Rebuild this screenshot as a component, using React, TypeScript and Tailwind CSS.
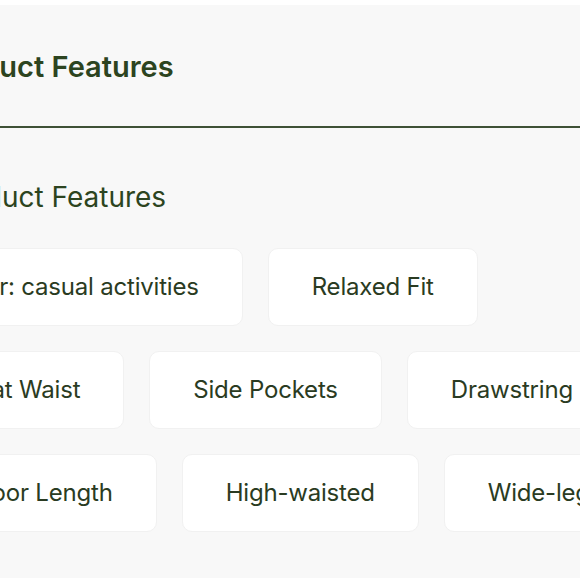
const features = [
  'For: casual activities',
  'Relaxed Fit',
  'Flat Waist',
  'Side Pockets',
  'Drawstring',
  'Floor Length',
  'High-waisted',
  'Wide-leg',
];

export default function App() {
  return (
    <div className="min-h-screen bg-white pt-[5px] overflow-hidden" style={{ fontFamily: 'Inter, "Noto Sans", sans-serif' }}>
      <div className="bg-[#f8f8f8] h-[573px] overflow-hidden">
        {/* header */}
        <div className="border-b-2 border-[#3f5136] w-[580px]">
          <h1 className="ml-[-66px] pt-[44px] pb-[41px] text-[29px] leading-[36px] font-semibold text-[#2c4420] whitespace-nowrap">
            Product Features
          </h1>
        </div>

        {/* body */}
        <div className="ml-[-72px] w-[740px]">
          <h2 className="ml-[12px] mt-[52px] text-[28px] leading-[34px] text-[#2c4420] whitespace-nowrap">
            Product Features
          </h2>
          <div className="mt-[34px] flex flex-wrap gap-[25px]">
            {features.map((f) => (
              <div
                key={f}
                className="bg-white rounded-[10px] border border-[#f1f1f1] px-[43px] py-[23px] text-[24px] leading-[30px] tracking-[-0.2px] text-[#2a3b22] whitespace-nowrap"
              >
                {f}
              </div>
            ))}
          </div>
        </div>
      </div>
    </div>
  );
}
